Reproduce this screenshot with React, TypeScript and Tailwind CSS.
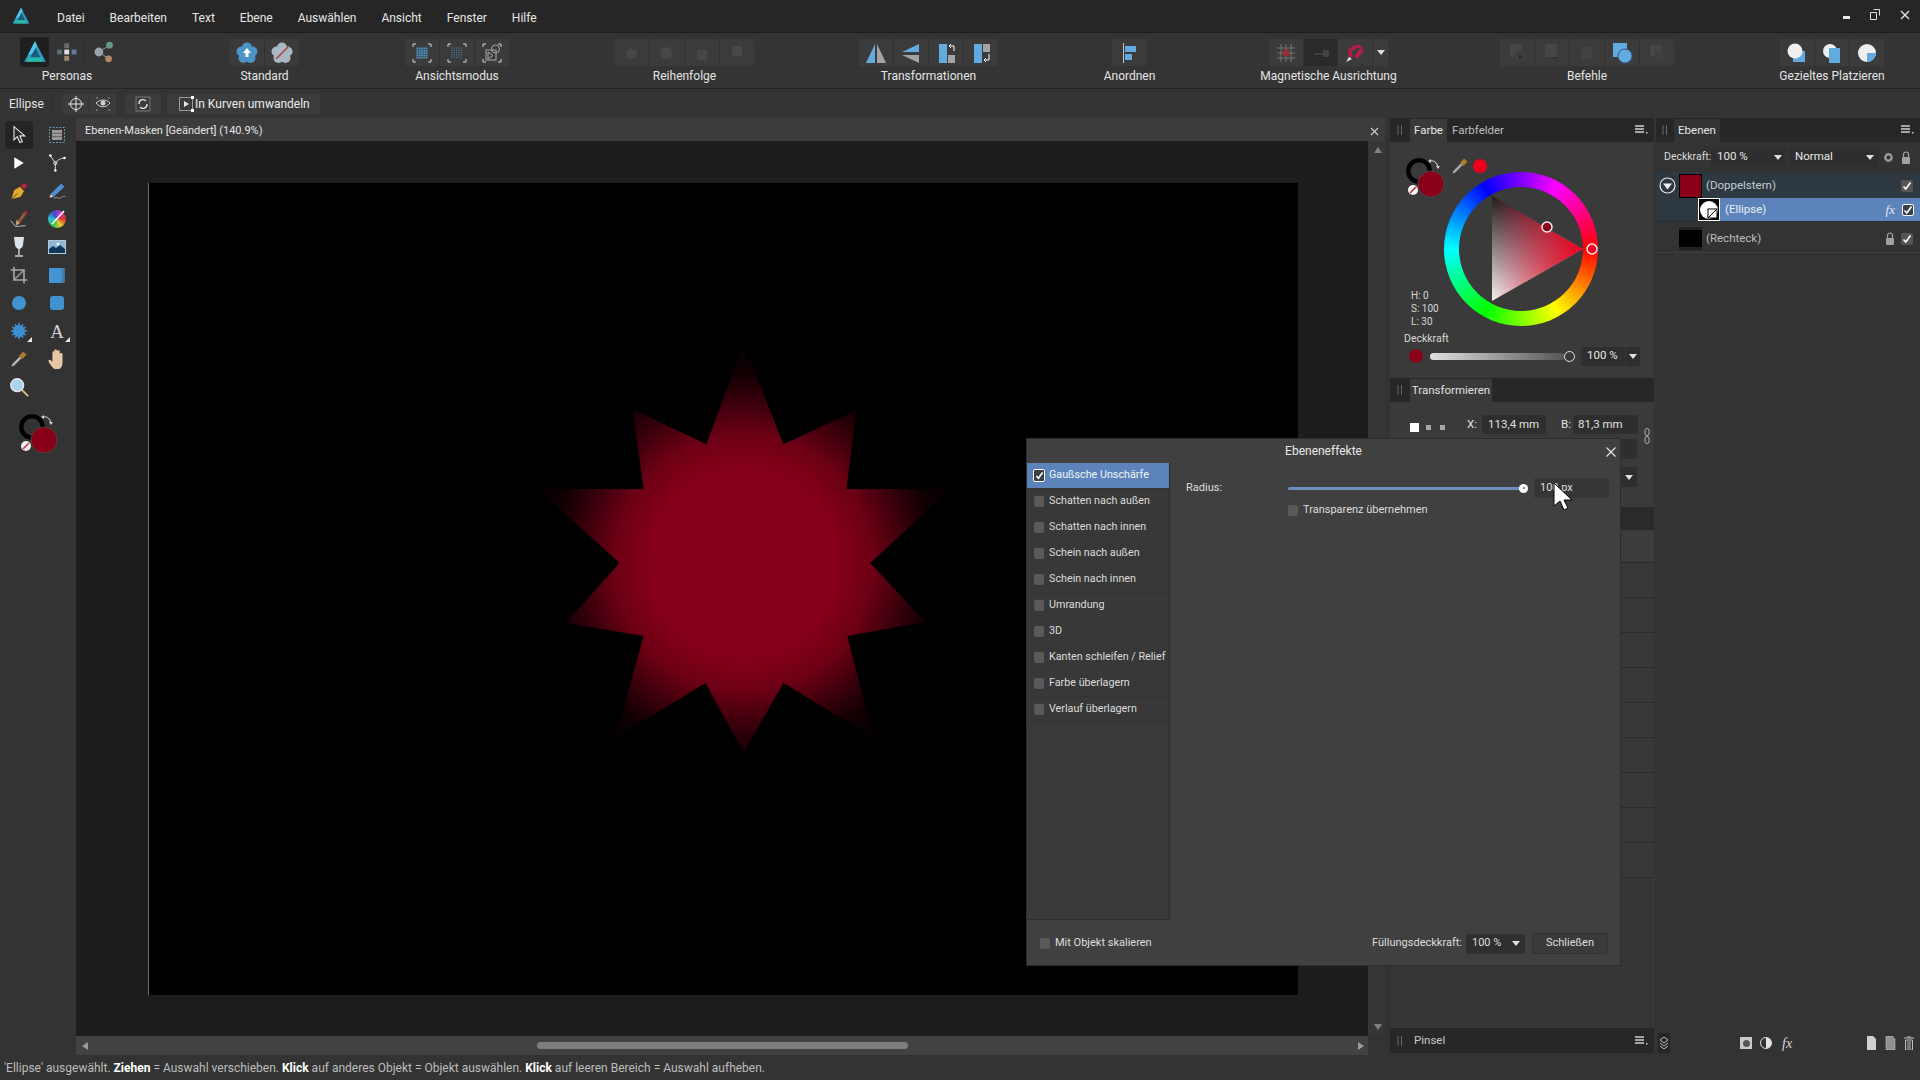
import type { ReactNode } from 'react'

type IconProps = { children: ReactNode; size?: number }

function Ico({ children, size = 24 }: IconProps) {
  return (
    <svg width={size} height={size} viewBox="0 0 24 24" fill="none" className="shrink-0">
      {children}
    </svg>
  )
}

function AffinityLogo({ size = 24 }: { size?: number }) {
  return (
    <svg width={size} height={size} viewBox="0 0 24 24" fill="none" className="shrink-0">
      <path d="M12 2 L22 21 H2 Z" fill="#2a9bc4" />
      <path d="M12 7 L17 17 H8 Z" fill="#1d5b7d" />
      <path d="M6 17 L18 17 L20 21 H4 Z" fill="#2bb8a6" />
      <path d="M12 2 L6 14 L9 14 L14 6 Z" fill="#53c7e8" />
    </svg>
  )
}

function Flower({ fill, children }: { fill: string; children?: ReactNode }) {
  const lobes = [
    [12, 6.5],
    [17.5, 10.5],
    [15.5, 17],
    [8.5, 17],
    [6.5, 10.5],
  ]
  return (
    <Ico>
      {lobes.map(([cx, cy]) => (
        <circle key={`${cx}-${cy}`} cx={cx} cy={cy} r="5" fill={fill} />
      ))}
      <circle cx="12" cy="12" r="6" fill={fill} />
      {children}
    </Ico>
  )
}

function ViewIcon({ dim, outline }: { dim?: boolean; outline?: boolean }) {
  const cells = []
  for (let y = 0; y < 5; y++) {
    for (let x = 0; x < 5; x++) {
      cells.push(
        <rect key={`${x}-${y}`} x={6.5 + x * 2.3} y={6.5 + y * 2.3} width={dim ? 1 : 1.8} height={dim ? 1 : 1.8} fill="#4f93c4" />,
      )
    }
  }
  return (
    <Ico>
      <path d="M3 6V3h3M18 3h3v3M21 18v3h-3M6 21H3v-3" stroke="#d5d5d5" strokeWidth="1" />
      {outline ? (
        <g stroke="#a8a8a8" strokeWidth="1">
          <rect x="6" y="9" width="10" height="10" />
          <circle cx="15.5" cy="8" r="4" />
          <path d="M8 11l5 3.5-5 3.5z" />
        </g>
      ) : (
        cells
      )}
    </Ico>
  )
}

const disabledShape = '#474747'

function Btn({ children, dark, w = 'flex-1' }: { children?: ReactNode; dark?: boolean; w?: string }) {
  return (
    <div className={`${w} h-full flex items-center justify-center border-r last:border-r-0 border-[#2f2f2f] ${dark ? 'bg-[#2a2a2a]' : ''}`}>
      {children}
    </div>
  )
}

function ToolGroup({ label, width, ml, children }: { label: string; width: string; ml: string; children: ReactNode }) {
  return (
    <div className={`flex flex-col items-center ${width} ${ml}`}>
      <div className="w-full h-[27px] flex bg-[#3b3b3b] rounded-[2px]">{children}</div>
      <div className="mt-[3px] whitespace-nowrap text-[12px] leading-[15px] text-[#e4e4e4]">{label}</div>
    </div>
  )
}

function Caret({ color = '#e0e0e0' }: { color?: string }) {
  return (
    <svg width="8" height="5" viewBox="0 0 8 5" className="shrink-0">
      <path d="M0 0h8L4 5z" fill={color} />
    </svg>
  )
}

function PanelMenu() {
  return (
    <svg width="14" height="12" viewBox="0 0 14 12" className="shrink-0">
      <path d="M1 2h9M1 5h9M1 8h9" stroke="#cfcfcf" strokeWidth="1.6" />
      <rect x="12" y="8" width="1.5" height="1.5" fill="#cfcfcf" />
    </svg>
  )
}

function DragHandle() {
  return (
    <svg width="6" height="12" viewBox="0 0 6 12" className="shrink-0">
      <path d="M1 1v10M4.5 1v10" stroke="#666" strokeWidth="1" />
    </svg>
  )
}

function ColorSwatches() {
  return (
    <svg width="42" height="42" viewBox="0 0 42 42" className="shrink-0">
      <circle cx="15" cy="15" r="11" fill="none" stroke="#000" strokeWidth="5" />
      <circle cx="15" cy="15" r="13.5" fill="none" stroke="#4a4a4a" strokeWidth="0.7" />
      <path d="M26 5c4-1 7 2 8 6" stroke="#cfcfcf" strokeWidth="1.2" fill="none" />
      <path d="M24 5l3-2v4zM34 13l-2-3h4z" fill="#cfcfcf" />
      <circle cx="27" cy="28" r="13" fill="#8a0019" stroke="#5b3a3f" strokeWidth="1" />
      <circle cx="9" cy="34" r="5" fill="#f4f4f4" />
      <path d="M6 37l6-6" stroke="#c8303c" strokeWidth="1.6" />
    </svg>
  )
}

function Tool({ children, active }: { children?: ReactNode; active?: boolean }) {
  return (
    <div className="h-[28px] flex items-center justify-center relative">
      {active ? <div className="w-[28px] h-[28px] rounded-[3px] bg-[#242424] flex items-center justify-center">{children}</div> : children}
    </div>
  )
}

function Corner() {
  return <div className="absolute right-[6px] bottom-[3px] w-0 h-0 border-l-[5px] border-l-transparent border-b-[5px] border-b-[#e8e8e8]" />
}

function ToolsColumn() {
  return (
    <div className="w-[76px] shrink-0 pt-[3px] flex flex-col">
      <div className="grid grid-cols-2">
        <Tool active>
          <Ico size={20}><path d="M6 2l0 16 4-4 3 7 3-1-3-7h6z" stroke="#e6e6e6" strokeWidth="1.3" fill="#2a2a2a" /></Ico>
        </Tool>
        <Tool>
          <Ico size={20}>
            <rect x="3" y="3" width="18" height="18" stroke="#6fa8cc" strokeWidth="1.2" strokeDasharray="2 2" />
            <rect x="6" y="6" width="12" height="12" fill="#9a9a9a" />
            <path d="M6 10h12M6 14h12" stroke="#555" />
          </Ico>
        </Tool>
        <Tool><Ico size={14}><path d="M4 2v20l16-10z" fill="#fff" /></Ico></Tool>
        <Tool>
          <Ico size={20}>
            <path d="M4 3l6 9v9M10 12c4-5 8-6 12-6" stroke="#d8d8d8" strokeWidth="1.2" />
            <circle cx="10" cy="12" r="2" stroke="#e8e8e8" />
            <circle cx="4" cy="3" r="1.5" fill="#fff" />
            <circle cx="10" cy="21" r="1.5" fill="#fff" />
            <circle cx="21" cy="6" r="1.5" fill="#fff" />
          </Ico>
        </Tool>
        <Tool>
          <Ico size={20}>
            <path d="M3 22l3-11 7-4 5 5-4 7z" fill="#e0a92e" />
            <path d="M3 22l7-7" stroke="#333" />
            <path d="M14 6l4-4 4 4-4 4z" fill="#b5283a" />
          </Ico>
        </Tool>
        <Tool>
          <Ico size={20}>
            <path d="M4 16L17 3l4 4L8 19z" fill="#4d8fd0" />
            <path d="M4 16l4 3-5 1z" fill="#e5c9a3" />
            <path d="M8 21c4-3 6 1 9-1s3-2 5-1" stroke="#a8a8a8" />
          </Ico>
        </Tool>
        <Tool>
          <Ico size={20}>
            <path d="M10 14L18 4l3 2-8 11z" fill="#8d5a33" />
            <path d="M17 5l3-3 2 2-2 3z" fill="#b5283a" />
            <path d="M9 13l4 4-5 3z" fill="#c9a47a" />
            <path d="M2 14l6 7 12-1" stroke="#cfcfcf" strokeWidth="1" />
          </Ico>
        </Tool>
        <Tool>
          <div className="w-[18px] h-[18px] rounded-full bg-[conic-gradient(from_90deg,#e03030,#e8d030,#30c050,#30c0d0,#3050d0,#d030c0,#e03030)] flex items-center justify-center">
            <svg width="18" height="18" viewBox="0 0 18 18"><path d="M4 14L16 1" stroke="#fff" strokeWidth="1.6" /></svg>
          </div>
        </Tool>
        <Tool>
          <Ico size={24}>
            <path d="M7 2h10l-1 8c-.3 2-2 4-4 4s-3.700-2-4-4z" fill="#dde2e6" />
            <path d="M12 14v6M8 21h8" stroke="#cfcfcf" strokeWidth="1.4" />
          </Ico>
        </Tool>
        <Tool>
          <svg width="18" height="14" viewBox="0 0 18 14">
            <rect width="18" height="14" fill="#8fb8d8" stroke="#d8d8d8" />
            <path d="M1 9l4-3 3 2 4-3 5 4v4H1z" fill="#12375c" />
            <circle cx="10" cy="4" r="1.500" fill="#f4f4f4" />
          </svg>
        </Tool>
        <Tool>
          <Ico size={20}>
            <path d="M6 2v16h16M2 6h16v16" stroke="#a6a6a6" strokeWidth="2" />
            <path d="M6 18L18 6" stroke="#a6a6a6" strokeWidth="1.5" />
          </Ico>
        </Tool>
        <Tool><div className="w-[16px] h-[15px] bg-[linear-gradient(90deg,#4494d2_70%,#3a6f9a)]" /></Tool>
        <Tool><div className="w-[14px] h-[14px] rounded-full bg-[#4292d0]" /></Tool>
        <Tool><div className="w-[14px] h-[14px] rounded-[3px] bg-[#4292d0]" /></Tool>
        <Tool>
          <Ico size={18}>
            <path d="M12 0l2 5 4-3-1 5 5-1-3 4 5 2-5 2 3 4-5-1 1 5-4-3-2 5-2-5-4 3 1-5-5 1 3-4-5-2 5-2-3-4 5 1-1-5 4 3z" fill="#3f8fd0" />
          </Ico>
          <Corner />
        </Tool>
        <Tool>
          <span className="font-['Liberation_Serif',serif] text-[19px] text-[#d4d4d4] leading-none">A</span>
          <Corner />
        </Tool>
        <Tool>
          <Ico size={20}>
            <path d="M3 21l3-1 9-9-2-2-9 9z" fill="#b8b8b8" />
            <path d="M12 8l5-5 4 4-5 5z" fill="#b07c2b" />
          </Ico>
        </Tool>
        <Tool>
          <Ico size={22}>
            <path d="M7 21c-2-3-5-6-4-8 1-1 3 1 4 2V5c0-2 2-2 2 0v6-8c0-2 3-2 3 0v8-7c0-2 3-2 3 0v8-5c0-2 3-2 3 0v9c0 4-2 7-5 7H9z" fill="#e8c7a5" />
          </Ico>
        </Tool>
        <Tool>
          <Ico size={22}>
            <circle cx="10" cy="10" r="7" fill="#a9d4ec" stroke="#e8e8e8" strokeWidth="1.5" />
            <path d="M15 15l7 7" stroke="#d9c08c" strokeWidth="2" />
          </Ico>
        </Tool>
        <Tool />
      </div>
      <div className="mt-[11px] pl-[17px]">
        <ColorSwatches />
      </div>
    </div>
  )
}

const star =
  '595,160 635,261 708,227 698,306 802,306 722,380 777,439 699,453 725,555 635,500 595,570 557,500 467,555 495,453 417,440 471,380 389,306 495,306 484,226 558,261'

function DocumentArea() {
  return (
    <div className="w-[1309px] shrink-0 flex flex-col">
      <div className="h-[23px] bg-[#3c3c3c] flex items-center justify-between pl-[9px] pr-[6px] pt-[4px] text-[11px] text-[#e4e4e4]">
        <span>Ebenen-Masken [Geändert] (140.9%)</span>
        <svg width="9" height="9" viewBox="0 0 9 9"><path d="M1 1l7 7M8 1L1 8" stroke="#d0d0d0" strokeWidth="1.1" /></svg>
      </div>
      <div className="flex-1 flex min-h-0">
        <div className="flex-1 bg-[#1d1d1d] pl-[72px] pt-[42px]">
          <div className="w-[1150px] h-[812px] bg-black border-l border-[#6a6a6a]">
            <svg className="w-full h-full" viewBox="0 0 1150 812">
              <defs>
                <radialGradient id="blur" gradientUnits="userSpaceOnUse" cx="595" cy="380" r="222">
                  <stop offset="0%" stopColor="#870019" />
                  <stop offset="42%" stopColor="#860019" />
                  <stop offset="58%" stopColor="#6c0014" />
                  <stop offset="72%" stopColor="#3c000b" />
                  <stop offset="85%" stopColor="#120003" />
                  <stop offset="100%" stopColor="#000" />
                </radialGradient>
              </defs>
              <polygon points={star} fill="url(#blur)" />
            </svg>
          </div>
        </div>
        <div className="w-[17px] bg-[#363636] flex flex-col items-center justify-between pt-[6px] pb-[6px] pl-[3px]">
          <svg width="8" height="6" viewBox="0 0 8 6"><path d="M4 0l4 6H0z" fill="#808080" /></svg>
          <svg width="8" height="6" viewBox="0 0 8 6"><path d="M4 6l4-6H0z" fill="#808080" /></svg>
        </div>
      </div>
      <div className="h-[19px] bg-[#424242] flex items-center pl-[6px] mr-[17px] relative">
        <svg width="6" height="8" viewBox="0 0 6 8"><path d="M0 4l6-4v8z" fill="#9a9a9a" /></svg>
        <div className="ml-[449px] w-[371px] h-[7px] rounded-full bg-[#7e7e7e]" />
        <svg className="ml-auto mr-[4px]" width="6" height="8" viewBox="0 0 6 8"><path d="M6 4L0 0v8z" fill="#9a9a9a" /></svg>
      </div>
    </div>
  )
}

function FieldBox({ className, children }: { className: string; children?: ReactNode }) {
  return <div className={`bg-[#2e2e2e] rounded-[2px] flex items-center ${className}`}>{children}</div>
}

function ColorPanel() {
  return (
    <div className="w-[264px] shrink-0 flex flex-col">
      <div className="h-[24px] bg-[#272727] flex items-end pl-[7px] pr-[6px] text-[11.5px]">
        <div className="h-full flex items-center mr-[7px]"><DragHandle /></div>
        <div className="w-[37px] h-[23px] bg-[#3a3a3a] flex items-center justify-center text-[#e8e8e8]">Farbe</div>
        <div className="ml-[5px] h-[23px] flex items-center text-[#bdbdbd]">Farbfelder</div>
        <div className="ml-auto h-full flex items-center"><PanelMenu /></div>
      </div>
      <div className="h-[236px] bg-[#3a3a3a] flex flex-col pt-[14px] pl-[14px] text-[#d8d8d8]">
        <div className="flex h-[147px] items-start">
          <div className="flex flex-col w-[42px]">
            <ColorSwatches />
            <div className="mt-[91px] pl-[7px] text-[10px] leading-[13px]">
              <div>H: 0</div>
              <div>S: 100</div>
              <div>L: 30</div>
            </div>
          </div>
          <div className="ml-[4px] flex items-center">
            <Ico size={20}>
              <path d="M3 21l3-1 9-9-2-2-9 9z" fill="#a9a9a9" />
              <path d="M12 8l5-5 4 4-5 5z" fill="#b07c2b" />
            </Ico>
          </div>
          <div className="ml-[3px] mt-[3px] w-[14px] h-[14px] rounded-full bg-[#f0001c]" />
          <div className="w-[154px] h-[154px] -ml-[43px] mt-[16px] rounded-full bg-[conic-gradient(from_90deg,#f00,#ff0,#0f0,#0ff,#00f,#f0f,#f00)] relative flex items-center justify-center shrink-0">
            <div className="w-[124px] h-[124px] rounded-full bg-[#3a3a3a]" />
            <svg className="absolute left-0 top-0" width="154" height="154" viewBox="0 0 154 154">
              <defs>
                <linearGradient id="tv" x1="0" y1="0" x2="0" y2="1">
                  <stop offset="0%" stopColor="#1c1c1c" />
                  <stop offset="100%" stopColor="#f4f4f4" />
                </linearGradient>
                <linearGradient id="th" x1="0" y1="0" x2="1" y2="0">
                  <stop offset="0%" stopColor="#f00020" stopOpacity="0" />
                  <stop offset="100%" stopColor="#f00020" />
                </linearGradient>
              </defs>
              <polygon points="48,24 139,77 48,129" fill="url(#tv)" />
              <polygon points="48,24 139,77 48,129" fill="url(#th)" />
              <circle cx="103" cy="55" r="5" fill="#8a0019" stroke="#f0f0f0" strokeWidth="1.5" />
              <circle cx="148" cy="77" r="5" fill="#f00020" stroke="#f0f0f0" strokeWidth="1.5" />
            </svg>
          </div>
        </div>
        <div className="mt-[29px] text-[10.5px] leading-[14px]">Deckkraft</div>
        <div className="flex items-center h-[20px]">
          <div className="ml-[5px] w-[14px] h-[14px] rounded-full bg-[#8a0019]" />
          <div className="ml-[7px] w-[135px] h-[7px] rounded-full bg-[linear-gradient(90deg,#e0e0e0,#555)]" />
          <div className="w-[11px] h-[11px] rounded-full border border-[#e4e4e4] shrink-0 -ml-[1px]" />
          <FieldBox className="ml-[6px] w-[59px] h-[19px] text-[11.5px] text-[#e6e6e6]">
            <span className="pl-[6px] w-[44px]">100 %</span>
            <div className="flex-1 h-full border-l border-[#3a3a3a] flex items-center justify-center"><Caret /></div>
          </FieldBox>
        </div>
      </div>
      <div className="h-[24px] bg-[#272727] flex items-end pl-[7px] text-[11.5px]">
        <div className="h-full flex items-center mr-[7px]"><DragHandle /></div>
        <div className="w-[82px] h-[23px] bg-[#3a3a3a] flex items-center justify-center text-[#e0e0e0]">Transformieren</div>
      </div>
      <div className="h-[105px] bg-[#3a3a3a] pt-[13px] flex">
        <div className="w-[254px]">
          <div className="flex items-center h-[19px] text-[11.5px] text-[#e0e0e0]">
            <div className="ml-[20px] mt-[6px] w-[9px] h-[9px] bg-white" />
            <div className="ml-[7px] mt-[6px] w-[5px] h-[5px] bg-[#a8a8a8]" />
            <div className="ml-[9px] mt-[6px] w-[5px] h-[5px] bg-[#a8a8a8]" />
            <span className="ml-[22px] w-[14px]">X:</span>
            <FieldBox className="ml-[1px] w-[64px] h-[19px] pl-[6px]">113,4 mm</FieldBox>
            <span className="ml-[15px] w-[12px]">B:</span>
            <FieldBox className="w-[65px] h-[19px] pl-[5px]">81,3 mm</FieldBox>
          </div>
          <div className="flex mt-[5px] pl-[91px] gap-[27px]">
            <FieldBox className="w-[64px] h-[20px]" />
            <FieldBox className="w-[65px] h-[20px]" />
          </div>
          <div className="flex justify-end mt-[8px] pr-[7px]">
            <FieldBox className="w-[17px] h-[20px] justify-center"><Caret /></FieldBox>
          </div>
        </div>
        <svg className="mt-[13px]" width="6" height="16" viewBox="0 0 6 16">
          <rect x="1" y="0.500" width="4" height="7" rx="2" stroke="#b0b0b0" fill="none" />
          <rect x="1" y="8.500" width="4" height="7" rx="2" stroke="#b0b0b0" fill="none" />
        </svg>
      </div>
      <div className="h-[23px] bg-[#2a2a2a]" />
      <div className="h-[33px] bg-[#3c3c3c] border-b border-[#2a2a2a]" />
      {Array.from({ length: 9 }).map((_, i) => (
        <div key={i} className="h-[35px] bg-[#373737] border-b border-[#2a2a2a]" />
      ))}
      <div className="flex-1 min-h-0 bg-[#363636] border-r border-[#404040]" />
      <div className="h-[25px] bg-[#272727] flex items-center pl-[7px] pr-[6px] pt-[1px] text-[11.5px] text-[#c8c8c8]">
        <DragHandle />
        <span className="ml-[11px]">Pinsel</span>
        <div className="ml-auto"><PanelMenu /></div>
      </div>
      <div className="h-[2px]" />
    </div>
  )
}

function Check({ dark }: { dark?: boolean }) {
  return (
    <div className={`w-[12px] h-[12px] rounded-[2px] flex items-center justify-center ${dark ? 'bg-[#3a3f4a] border border-white' : 'bg-[#555]'}`}>
      <svg width="10" height="10" viewBox="0 0 10 10"><path d="M1.500 5.500l2.300 2.500L8.500 1.500" stroke="#fff" strokeWidth="1.6" fill="none" /></svg>
    </div>
  )
}

function SmallLock() {
  return (
    <svg width="10" height="13" viewBox="0 0 10 13">
      <path d="M2.500 6V3.500a2.500 2.500 0 0 1 5 0V6" stroke="#a0a0a0" strokeWidth="1.2" fill="none" />
      <rect x="1" y="6" width="8" height="7" rx="1" fill="#a0a0a0" />
    </svg>
  )
}

function LayersPanel() {
  return (
    <div className="w-[264px] shrink-0 flex flex-col text-[#d8d8d8]">
      <div className="h-[24px] bg-[#272727] flex items-end pl-[6px] pr-[6px] text-[11.5px]">
        <div className="h-full flex items-center mr-[6px]"><DragHandle /></div>
        <div className="w-[46px] h-[23px] bg-[#333] flex items-center justify-center text-[#e8e8e8]">Ebenen</div>
        <div className="ml-auto h-full flex items-center"><PanelMenu /></div>
      </div>
      <div className="flex-1 min-h-0 bg-[#333] flex flex-col">
        <div className="h-[30px] flex items-center pl-[8px] text-[10.5px]">
          <span className="w-[47px]">Deckkraft:</span>
          <FieldBox className="w-[74px] h-[19px] pl-[6px] pr-[3px] justify-between text-[11.5px] text-[#e6e6e6]"><span>100 %</span><Caret /></FieldBox>
          <FieldBox className="ml-[5px] w-[89px] h-[19px] pl-[5px] pr-[5px] justify-between text-[11.5px] text-[#e6e6e6]"><span>Normal</span><Caret /></FieldBox>
          <svg className="ml-[4px]" width="11" height="11" viewBox="0 0 11 11"><circle cx="5.500" cy="5.500" r="3.200" stroke="#9a9a9a" strokeWidth="2.400" fill="none" /></svg>
          <div className="ml-[7px]"><SmallLock /></div>
        </div>
        <div className="h-[27px] bg-[#2d3840] flex items-center text-[11.5px]">
          <div className="w-[23px] flex justify-center">
            <svg width="17" height="17" viewBox="0 0 17 17">
              <circle cx="8.500" cy="8.500" r="7.500" stroke="#e8e8e8" strokeWidth="1.200" fill="none" />
              <path d="M4 6.500h9l-4.500 6z" fill="#f0f0f0" />
            </svg>
          </div>
          <div className="w-[23px] h-[24px] bg-[#8a0019] border border-black" />
          <span className="ml-[4px] text-[#c4ccd2]">(Doppelstern)</span>
          <div className="ml-auto mr-[7px]"><Check /></div>
        </div>
        <div className="h-[23px] bg-[#2d3840] flex items-center text-[11.5px] border-b-[2px] border-[#283038]">
          <div className="w-[42px]" />
          <div className="w-[22px] h-[23px] bg-black border border-white flex items-center justify-center relative">
            <div className="w-[18px] h-[18px] rounded-full bg-white" />
            <svg className="absolute right-[1px] bottom-[1px]" width="11" height="11" viewBox="0 0 11 11">
              <rect x="1" y="1" width="9" height="9" fill="#fff" stroke="#000" strokeWidth="1" />
              <path d="M1 10l9-9" stroke="#000" strokeWidth="1" />
            </svg>
          </div>
          <div className="flex-1 h-[23px] bg-[#5c84ba] flex items-center pl-[5px] pr-[6px] text-[#e8eef5]">
            <span>(Ellipse)</span>
            <span className="ml-auto mr-[7px] font-['Liberation_Serif',serif] italic text-[13px] text-[#e0e6ee]">fx</span>
            <Check dark />
          </div>
        </div>
        <div className="h-[28px] border-b border-[#3e3e3e] flex items-center text-[11.5px] mt-[3px]">
          <div className="w-[23px]" />
          <div className="w-[23px] h-[23px] bg-black border-y-[3px] border-[#222]" />
          <span className="ml-[4px] text-[#bcbcbc]">(Rechteck)</span>
          <div className="ml-auto mr-[6px]"><SmallLock /></div>
          <div className="mr-[7px]"><Check /></div>
        </div>
        <div className="flex-1" />
        <div className="h-[20px] flex items-center pl-[2px] mb-[2px]">
          <div className="w-[12px] h-[20px] bg-[#262626] flex items-center justify-center">
            <svg width="10" height="14" viewBox="0 0 10 14"><path d="M5 1l4 3-4 3-4-3zM1 7l4 3 4-3M1 10l4 3 4-3" stroke="#bdbdbd" strokeWidth="1" fill="none" /></svg>
          </div>
          <div className="ml-[70px] w-[12px] h-[12px] bg-[#c9c9c9] flex items-center justify-center"><div className="w-[7px] h-[7px] rounded-full bg-[#555]" /></div>
          <div className="ml-[8px] w-[12px] h-[12px] rounded-full bg-[linear-gradient(90deg,#333_50%,#e4e4e4_50%)] border border-[#ddd]" />
          <span className="ml-[10px] font-['Liberation_Serif',serif] italic text-[14px] text-[#d8d8d8]">fx</span>
          <svg className="ml-[74px]" width="11" height="14" viewBox="0 0 11 14"><path d="M1 0h6l3 3v11H1z" fill="#d0d0d0" /></svg>
          <svg className="ml-[8px]" width="11" height="14" viewBox="0 0 11 14"><path d="M1 0h6l3 3v11H1z" fill="#8f8f8f" stroke="#d0d0d0" strokeDasharray="1 1" /></svg>
          <svg className="ml-[8px]" width="10" height="14" viewBox="0 0 10 14"><path d="M0 2h10M3 1h4M1.500 4h7v10h-7zM4 5v8M6 5v8" stroke="#bdbdbd" strokeWidth="1" fill="none" /></svg>
        </div>
      </div>
    </div>
  )
}

function EffectRow({ label, checked }: { label: string; checked?: boolean }) {
  return (
    <div className={`h-[26px] flex items-center pl-[6px] border-b border-[#333] text-[10.75px] ${checked ? 'bg-[#5c84ba] text-[#f0f4f8]' : 'bg-[#383838] text-[#dcdcdc]'}`}>
      {checked ? (
        <div className="w-[12px] h-[13px] rounded-[2px] bg-[#3a3f4a] border border-white flex items-center justify-center shrink-0">
          <svg width="9" height="9" viewBox="0 0 10 10"><path d="M1.500 5.500l2.300 2.500L8.500 1.500" stroke="#fff" strokeWidth="1.8" fill="none" /></svg>
        </div>
      ) : (
        <div className="w-[10px] h-[11px] mx-[1px] rounded-[2px] bg-[#5a5a5a] shrink-0" />
      )}
      <span className="ml-[4px] whitespace-nowrap">{label}</span>
    </div>
  )
}

const effects = [
  'Schatten nach außen',
  'Schatten nach innen',
  'Schein nach außen',
  'Schein nach innen',
  'Umrandung',
  '3D',
  'Kanten schleifen / Relief',
  'Farbe überlagern',
  'Verlauf überlagern',
]

function EffectsDialog() {
  return (
    <div className="absolute left-[1026px] top-[438px] w-[595px] h-[528px] bg-[#404040] border border-[#2c2c2c] flex flex-col text-[#dedede]">
      <div className="h-[24px] flex items-center justify-center relative text-[12px]">
        <span className="text-[#e8e8e8]">Ebeneneffekte</span>
        <svg className="absolute right-[4px] top-[8px]" width="10" height="10" viewBox="0 0 10 10"><path d="M0.500 0.500l9 9M9.500 0.500l-9 9" stroke="#e0e0e0" strokeWidth="1.200" /></svg>
      </div>
      <div className="flex-1 flex min-h-0">
        <div className="w-[143px] bg-[#393939] border-r border-b border-[#2e2e2e] flex flex-col">
          <EffectRow label="Gaußsche Unschärfe" checked />
          {effects.map((e) => (
            <EffectRow key={e} label={e} />
          ))}
        </div>
        <div className="flex-1 pl-[16px] pt-[15px] pr-[11px] text-[11px]">
          <div className="flex items-center h-[20px]">
            <span className="w-[102px]">Radius:</span>
            <div className="w-[240px] h-[3px] bg-[#6d8fbf] rounded-full flex items-center justify-end">
              <div className="w-[9px] h-[9px] rounded-full bg-white flex items-center justify-center shrink-0"><div className="w-[2px] h-[2px] bg-[#667] rounded-full" /></div>
            </div>
            <FieldBox className="ml-[6px] w-[75px] h-[20px] pl-[6px] bg-[#353535]">100 px</FieldBox>
          </div>
          <div className="flex items-center ml-[102px] mt-[2px] h-[20px]">
            <div className="w-[10px] h-[11px] rounded-[2px] bg-[#5a5a5a]" />
            <span className="ml-[5px]">Transparenz übernehmen</span>
          </div>
        </div>
      </div>
      <div className="h-[45px] flex items-center pl-[13px] pr-[12px] pt-[2px] text-[11px]">
        <div className="w-[10px] h-[11px] rounded-[2px] bg-[#5a5a5a]" />
        <span className="ml-[5px]">Mit Objekt skalieren</span>
        <span className="ml-auto">Füllungsdeckkraft:</span>
        <FieldBox className="ml-[4px] w-[59px] h-[20px] pl-[6px] pr-[5px] justify-between bg-[#2f2f2f]"><span>100 %</span><Caret /></FieldBox>
        <div className="ml-[7px] w-[76px] h-[21px] bg-[#3a3a3a] border border-[#333] rounded-[2px] flex items-center justify-center">Schließen</div>
      </div>
    </div>
  )
}

const menus = ['Datei', 'Bearbeiten', 'Text', 'Ebene', 'Auswählen', 'Ansicht', 'Fenster', 'Hilfe']

export default function App() {
  return (
    <div className="w-[1920px] h-[1080px] relative overflow-hidden flex flex-col bg-[#333] text-[#e4e4e4] font-['Roboto',sans-serif] text-[12px]">
      {/* Menu bar */}
      <div className="h-[33px] shrink-0 bg-[#262626] border-b border-[#1d1d1d] flex items-center pl-[11px]">
        <AffinityLogo size={20} />
        <div className="ml-[26px] pt-[3px] flex gap-[25px] text-[12px] text-[#e6e6e6]">
          {menus.map((m) => (
            <span key={m}>{m}</span>
          ))}
        </div>
        <div className="ml-auto flex items-center gap-[20px] pr-[10px] -mt-[3px]">
          <div className="w-[7px] h-[3px] mt-[5px] bg-[#e8e8e8]" />
          <svg width="10" height="11" viewBox="0 0 10 11"><path d="M3.500 0.500h6v6M0.500 3.500h6v7h-6z" stroke="#e0e0e0" fill="none" /></svg>
          <svg width="10" height="10" viewBox="0 0 10 10"><path d="M1 1l8 8M9 1l-8 8" stroke="#e8e8e8" strokeWidth="1.300" /></svg>
        </div>
      </div>

      {/* Studio toolbar */}
      <div className="h-[56px] shrink-0 bg-[#343434] border-b border-[#232323] flex pt-[6px] pl-[20px]">
        <div className="flex flex-col items-center w-[94px]">
          <div className="h-[27px] flex w-full items-center -mt-[1px]">
            <div className="w-[30px] h-[30px] rounded-[3px] bg-[#1f1f1f] flex items-center justify-center"><AffinityLogo size={26} /></div>
            <svg className="ml-[7px]" width="22" height="22" viewBox="0 0 22 22">
              <rect x="8.500" y="2" width="5" height="5" fill="#6d6a66" />
              <rect x="1" y="8.500" width="5" height="5" fill="#5c6a72" />
              <rect x="8.500" y="8.500" width="5" height="5" fill="#e0e0e0" />
              <rect x="16" y="8.500" width="5" height="5" fill="#6a7aa8" />
              <rect x="8.500" y="15" width="5" height="5" fill="#a08a6e" />
            </svg>
            <div className="ml-[5px] w-px h-[24px] bg-[#2a2a2a]" />
            <svg className="ml-[9px]" width="22" height="22" viewBox="0 0 22 22">
              <path d="M6 11L17 4M6 11l10 7" stroke="#999" />
              <circle cx="6" cy="11" r="4.500" fill="#97a3a6" />
              <circle cx="17" cy="4" r="3.500" fill="#5e9a84" />
              <circle cx="16" cy="18" r="3.500" fill="#b08868" />
            </svg>
          </div>
          <div className="mt-[4px] whitespace-nowrap text-[12px] leading-[15px] text-[#e4e4e4]">Personas</div>
        </div>
        <ToolGroup label="Standard" width="w-[69px]" ml="ml-[116px]">
          <Btn><Flower fill="#4b94c8"><path d="M12 7l4 5h-2.500v4h-3v-4H8z" fill="#fff" /></Flower></Btn>
          <Btn><Flower fill="#a9b7c3"><path d="M6 18L18 6" stroke="#b83a48" strokeWidth="1.500" /></Flower></Btn>
        </ToolGroup>
        <ToolGroup label="Ansichtsmodus" width="w-[104px]" ml="ml-[106px]">
          <Btn><ViewIcon /></Btn>
          <Btn><ViewIcon dim /></Btn>
          <Btn><ViewIcon outline /></Btn>
        </ToolGroup>
        <ToolGroup label="Reihenfolge" width="w-[139px]" ml="ml-[106px]">
          <Btn><Ico><circle cx="11" cy="13" r="5" fill={disabledShape} /><rect x="11" y="9" width="6" height="6" fill={disabledShape} /></Ico></Btn>
          <Btn><Ico><circle cx="11" cy="12" r="6" fill={disabledShape} /><path d="M12 18h5v-5" stroke={disabledShape} /></Ico></Btn>
          <Btn><Ico><rect x="7" y="9" width="10" height="10" fill={disabledShape} /></Ico></Btn>
          <Btn><Ico><rect x="7" y="5" width="10" height="10" fill={disabledShape} /></Ico></Btn>
        </ToolGroup>
        <ToolGroup label="Transformationen" width="w-[139px]" ml="ml-[105px]">
          <Btn><Ico><path d="M2 22L11 3v19z" fill="#62abe0" /><path d="M13 3l9 19h-9z" fill="#a3a3a3" /></Ico></Btn>
          <Btn><Ico><path d="M3 11L20 3v8z" fill="#62abe0" /><path d="M3 14l17 8v-8z" fill="#a3a3a3" /></Ico></Btn>
          <Btn><Ico><rect x="5" y="3" width="8" height="19" fill="#62abe0" /><rect x="14" y="14" width="7" height="8" fill="#a3a3a3" /><path d="M15 5h5v5M15 5l2-2M15 5l2 2" stroke="#fff" /></Ico></Btn>
          <Btn><Ico><rect x="5" y="3" width="8" height="19" fill="#62abe0" /><rect x="14" y="3" width="7" height="8" fill="#a3a3a3" /><path d="M20 13v6h-5M15 19l2-2M15 19l2 2" stroke="#fff" /></Ico></Btn>
        </ToolGroup>
        <ToolGroup label="Anordnen" width="w-[35px]" ml="ml-[114px]">
          <Btn><Ico><path d="M5.500 2v20" stroke="#c4c4c4" /><rect x="7" y="5" width="11" height="6" fill="#62abe0" /><rect x="7" y="13" width="7" height="6" fill="#62abe0" /></Ico></Btn>
        </ToolGroup>
        <ToolGroup label="Magnetische Ausrichtung" width="w-[119px]" ml="ml-[122px]">
          <Btn>
            <Ico>
              <path d="M7 3v18M12 3v18M17 3v18M3 7h18M3 12h18M3 17h18" stroke="#777" />
              <rect x="9" y="9" width="6" height="6" fill="#9a2b38" />
            </Ico>
          </Btn>
          <Btn dark><Ico><path d="M5 13h9" stroke="#555" /><rect x="14" y="9" width="6" height="7" fill="#444" /></Ico></Btn>
          <Btn>
            <Ico>
              <path d="M6 17L5 12c0-5 6-9 11-8 4 1 5 5 3 8l-5 6-3-3 5-6c1-1 0-3-2-2-3 1-6 4-5 6l1 2z" fill="#b01e48" />
              <path d="M3 21l3-5 3 2z" fill="#e0e0e0" />
            </Ico>
          </Btn>
          <Btn w="w-[15px]"><Caret /></Btn>
        </ToolGroup>
        <ToolGroup label="Befehle" width="w-[174px]" ml="ml-[112px]">
          <Btn><Ico><rect x="5" y="3" width="12" height="13" fill={disabledShape} /><circle cx="15" cy="15" r="6" fill="#3e3e3e" /><path d="M13 16h4M15 14v4" stroke="#222" /></Ico></Btn>
          <Btn><Ico><rect x="5" y="3" width="12" height="13" fill={disabledShape} /><path d="M13 17h5" stroke="#222" /></Ico></Btn>
          <Btn><Ico><rect x="7" y="6" width="10" height="12" fill="#434343" /></Ico></Btn>
          <Btn><Ico><rect x="3" y="2" width="14" height="14" fill="#62abe0" /><circle cx="15" cy="15" r="7" fill="#62abe0" stroke="#2c5a7c" /></Ico></Btn>
          <Btn><Ico><rect x="5" y="4" width="11" height="11" fill={disabledShape} /><rect x="10" y="10" width="10" height="10" fill="#3f3f3f" /></Ico></Btn>
        </ToolGroup>
        <ToolGroup label="Gezieltes Platzieren" width="w-[104px]" ml="ml-[106px]">
          <Btn><Ico><rect x="8" y="10" width="12" height="11" fill="#62abe0" /><circle cx="10" cy="10" r="7.500" fill="#efefef" /></Ico></Btn>
          <Btn><Ico><circle cx="10" cy="10" r="7" fill="#efefef" /><rect x="9" y="7" width="11" height="15" fill="#62abe0" /></Ico></Btn>
          <Btn><Ico><circle cx="12" cy="12" r="9" fill="#efefef" /><path d="M12 12h9a9 9 0 0 1-9 9z" fill="#62abe0" /></Ico></Btn>
        </ToolGroup>
      </div>

      {/* Context toolbar */}
      <div className="h-[29px] shrink-0 bg-[#343434] flex items-center pl-[9px]">
        <span className="text-[12px] w-[33px]">Ellipse</span>
        <div className="ml-[10px] w-px h-[20px] bg-[#2c2c2c]" />
        <div className="ml-[10px] w-[53px] h-[20px] flex bg-[#3b3b3b] rounded-[2px]">
          <Btn><svg width="16" height="16" viewBox="0 0 16 16"><circle cx="8" cy="8" r="5.500" stroke="#e8e8e8" fill="none" /><path d="M8 0v16M0 8h16" stroke="#e8e8e8" /></svg></Btn>
          <Btn><svg width="16" height="16" viewBox="0 0 16 16"><path d="M1 2h2M13 2h2M1 14h2M13 14h2" stroke="#999" /><path d="M1 7c4-4 10-4 14 0-4 5-10 5-14 0z" stroke="#d0d0d0" fill="none" /><circle cx="8" cy="7" r="2.500" fill="#d0d0d0" /></svg></Btn>
        </div>
        <div className="ml-[9px] w-[36px] h-[20px] flex bg-[#3b3b3b] rounded-[2px] items-center justify-center">
          <svg width="16" height="16" viewBox="0 0 16 16"><path d="M1 1h14v14H1z" stroke="#777" fill="none" /><path d="M4 8a4 4 0 0 1 7-3M12 8a4 4 0 0 1-7 3" stroke="#e8e8e8" strokeWidth="1.300" fill="none" /></svg>
        </div>
        <div className="ml-[6px] w-[153px] h-[20px] flex bg-[#3b3b3b] rounded-[2px] items-center pl-[11px] text-[12px] text-[#ececec]">
          <svg width="16" height="16" viewBox="0 0 16 16" className="shrink-0"><rect x="1.500" y="1.500" width="13" height="13" stroke="#999" fill="none" /><path d="M6 5l5 3-5 3z" fill="#e8e8e8" /><rect x="13" y="0" width="3" height="3" fill="#fff" /><rect x="13" y="13" width="3" height="3" fill="#fff" /></svg>
          <span className="ml-[1px] whitespace-nowrap">In Kurven umwandeln</span>
        </div>
      </div>

      {/* Workspace */}
      <div className="flex-1 flex min-h-0">
        <ToolsColumn />
        <DocumentArea />
        <div className="w-[5px] shrink-0" />
        <ColorPanel />
        <div className="w-[2px] shrink-0" />
        <LayersPanel />
      </div>

      {/* Status bar */}
      <div className="h-[25px] shrink-0 bg-[#333] flex items-center pl-[4px] pt-[1px] text-[12px] text-[#bdbdbd] whitespace-pre">
        <span>'Ellipse' ausgewählt. </span>
        <b className="text-white font-bold">Ziehen</b>
        <span> = Auswahl verschieben. </span>
        <b className="text-white font-bold">Klick</b>
        <span> auf anderes Objekt = Objekt auswählen. </span>
        <b className="text-white font-bold">Klick</b>
        <span> auf leeren Bereich = Auswahl aufheben.</span>
      </div>

      <EffectsDialog />

      {/* Mouse pointer */}
      <svg className="absolute left-[1553px] top-[482px]" width="20" height="30" viewBox="0 0 20 30">
        <path d="M1 1v23l6-5 4 9 4-2-4-8h8z" fill="#fff" stroke="#000" strokeWidth="1" />
      </svg>
    </div>
  )
}
